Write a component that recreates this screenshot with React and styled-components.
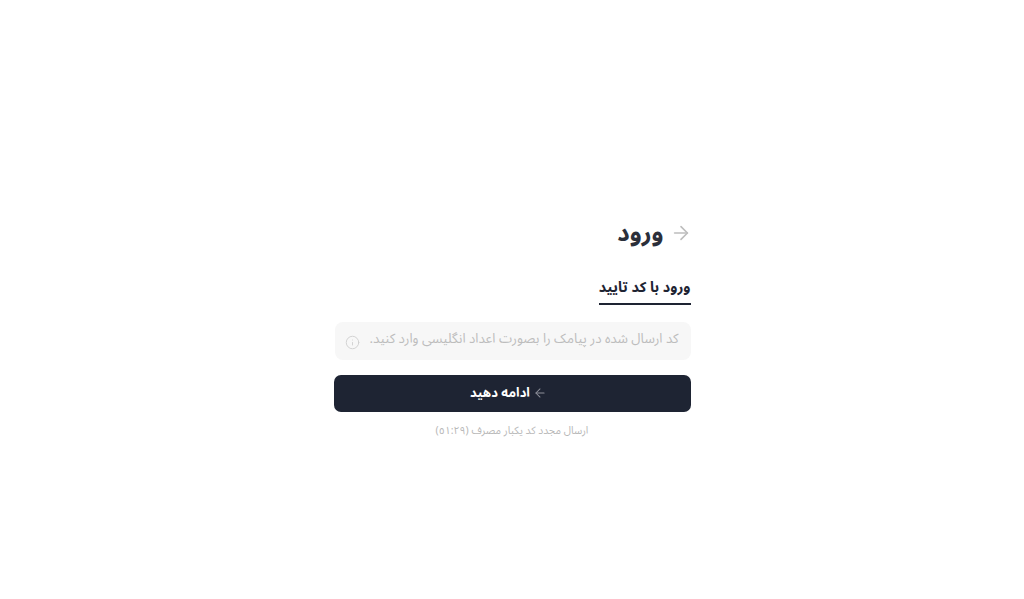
import React from "react";
import styled, { createGlobalStyle } from "styled-components";
import { ArrowLeft, ArrowRight, Info } from "lucide-react";

const GlobalStyle = createGlobalStyle`
  html, body {
    margin: 0;
    padding: 0;
    background: #fff;
  }
  body {
    font-family: "Noto Sans Arabic", "DejaVu Sans", "Noto Sans", sans-serif;
  }
`;

const Page = styled.div`
  min-height: 599px;
  display: flex;
  justify-content: center;
  padding-top: 218px;
  box-sizing: border-box;
`;

const Form = styled.form`
  width: 357px;
  direction: rtl;
  display: flex;
  flex-direction: column;
`;

const Header = styled.div`
  display: flex;
  align-items: center;
  gap: 6px;
  height: 30px;
`;

const BackArrow = styled(ArrowRight)`
  flex: none;
  margin-right: -1px;
`;

const Title = styled.h1`
  margin: 0;
  font-size: 24px;
  font-weight: 700;
  color: #2b2f3a;
`;

const Tabs = styled.div`
  display: flex;
  margin-top: 29px;
`;

const Tab = styled.div`
  font-size: 14.4px;
  font-weight: 700;
  color: #1e2433;
  padding-bottom: 4px;
  border-bottom: 2px solid #1e2433;
  line-height: 22px;
`;

const Field = styled.div`
  margin-top: 17px;
  height: 38px;
  margin-left: 1px;
  background: #f7f7f7;
  border-radius: 8px;
  display: flex;
  align-items: center;
  padding: 0 12px 0 10px;
  gap: 4px;
`;

const Input = styled.input`
  flex: 1;
  min-width: 0;
  padding: 0;
  margin-bottom: 5px;
  border: 0;
  outline: 0;
  background: transparent;
  font: inherit;
  font-size: 13.3px;
  color: #1e2433;

  &::placeholder {
    color: #bdbdbd;
    opacity: 1;
  }
`;

const InfoMark = styled(Info)`
  flex: none;
  margin-top: 3px;
`;

const Submit = styled.button`
  margin-top: 15px;
  height: 37px;
  border: 0;
  border-radius: 7px;
  background: #1e2433;
  color: #fff;
  font: inherit;
  font-size: 13px;
  font-weight: 700;
  display: flex;
  align-items: center;
  justify-content: center;
  gap: 3px;
  padding: 0 7px 2px 0;
`;

const Resend = styled.p`
  margin: 11px 0 0;
  font-size: 10.5px;
  font-weight: 400;
  line-height: 16px;
  text-align: center;
  color: #b8b8b8;
`;

export default function App() {
  return (
    <>
      <GlobalStyle />
      <Page>
        <Form onSubmit={(event) => event.preventDefault()}>
          <Header>
            <BackArrow size={22} color="#bdbdbd" strokeWidth={1.75} />
            <Title>ورود</Title>
          </Header>
          <Tabs>
            <Tab>ورود با کد تایید</Tab>
          </Tabs>
          <Field>
            <Input placeholder="کد ارسال شده در پیامک را بصورت اعداد انگلیسی وارد کنید." />
            <InfoMark size={15} color="#d0d0d0" strokeWidth={1.5} />
          </Field>
          <Submit type="submit">
            <ArrowLeft size={14} color="#8d909a" strokeWidth={1.75} />
            ادامه دهید
          </Submit>
          <Resend>ارسال مجدد کد یکبار مصرف (٥١:٢٩)</Resend>
        </Form>
      </Page>
    </>
  );
}
